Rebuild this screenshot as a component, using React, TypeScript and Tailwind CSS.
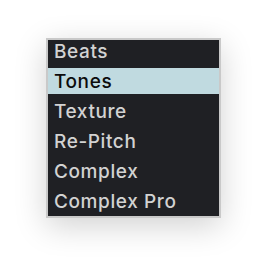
import React from "react";

const items = ["Beats", "Tones", "Texture", "Re-Pitch", "Complex", "Complex Pro"];

export default function App() {
  return (
    <div className="w-[266px] h-[272px] bg-white flex items-start justify-start pl-[46px] pt-[38px]">
      <div className="w-[175px] h-[180px] border-2 border-[#c9c9c9] bg-[#1f2024] overflow-hidden shadow-[0_8px_30px_rgba(0,0,0,0.18)]">
        <div className="flex flex-col gap-[4px] mt-[-2px]" style={{ fontFamily: "Inter, 'Noto Sans', sans-serif" }}>
          {items.map((it, i) => (
            <div
              key={it}
              className={
                i === 1
                  ? "h-[26px] flex items-center pl-[6px] pt-[2px] text-[19px] font-medium tracking-[0.6px] bg-[#c0dae0] text-[#0c0c0c]"
                  : "h-[26px] flex items-center pl-[6px] pt-[2px] text-[19px] font-medium tracking-[0.6px] text-[#d2d2d2]"
              }
            >
              {it}
            </div>
          ))}
        </div>
      </div>
    </div>
  );
}
